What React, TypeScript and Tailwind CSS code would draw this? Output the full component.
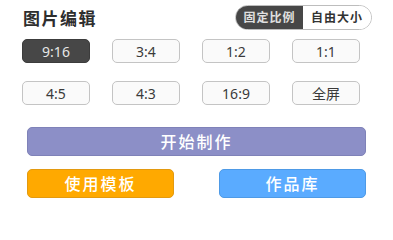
import { useState } from 'react';

const ratios = ['9:16', '3:4', '1:2', '1:1', '4:5', '4:3', '16:9', '全屏'];

export default function App() {
  const [selected, setSelected] = useState('9:16');
  const [mode, setMode] = useState<'fixed' | 'free'>('fixed');

  return (
    <div
      className="w-[393px] h-[204px] bg-white overflow-hidden"
      style={{ fontFamily: '"Noto Sans", "Noto Sans CJK SC", sans-serif' }}
    >
      {/* 标题 + 切换 */}
      <div className="flex items-start justify-between pl-[23px] pr-[21px] pt-[5px]">
        <h1 className="text-[17px] leading-[25px] pt-[1px] font-semibold text-[#2e2e2e] tracking-[1.5px]">图片编辑</h1>
        <div className="flex h-[25px] rounded-full border border-[#bdbdbd] overflow-hidden text-[12px] tracking-[1px]">
          <button
            onClick={() => setMode('fixed')}
            className={
              mode === 'fixed'
                ? 'w-[67px] bg-[#474747] text-[#e0e0e0] font-semibold'
                : 'w-[67px] bg-white text-[#333] font-semibold'
            }
          >
            固定比例
          </button>
          <button
            onClick={() => setMode('free')}
            className={
              mode === 'free'
                ? 'w-[68px] bg-[#474747] text-[#e0e0e0] font-semibold'
                : 'w-[68px] bg-white text-[#333] font-semibold'
            }
          >
            自由大小
          </button>
        </div>
      </div>

      {/* 比例按钮 */}
      <div className="grid grid-cols-[repeat(4,68px)] gap-x-[22px] gap-y-[18px] pl-[22px] mt-[8px]">
        {ratios.map((r) => (
          <button
            key={r}
            onClick={() => setSelected(r)}
            className={
              selected === r
                ? 'h-[24px] rounded-[5px] bg-[#474747] border border-[#3c3c3c] text-[14px] text-[#e6e6e6]'
                : 'h-[24px] rounded-[5px] bg-[#fafafa] border border-[#c4c4c4] text-[14px] text-[#3a3a3a]'
            }
          >
            {r}
          </button>
        ))}
      </div>

      {/* 操作按钮 */}
      <div className="flex flex-col gap-[13px] pl-[27px] pr-[27px] mt-[22px]">
        <button className="h-[29px] rounded-[5px] bg-[#8c8fc7] border border-[#7f82b8] text-white text-[16px] font-medium tracking-[2px]">
          开始制作
        </button>
        <div className="flex justify-between">
          <button className="w-[147px] h-[29px] rounded-[5px] bg-[#ffa900] border border-[#e39a10] text-white text-[16px] font-medium tracking-[2px]">
            使用模板
          </button>
          <button className="w-[147px] h-[29px] rounded-[5px] bg-[#5aabff] border border-[#4e9ae6] text-white text-[16px] font-medium tracking-[2px]">
            作品库
          </button>
        </div>
      </div>
    </div>
  );
}
